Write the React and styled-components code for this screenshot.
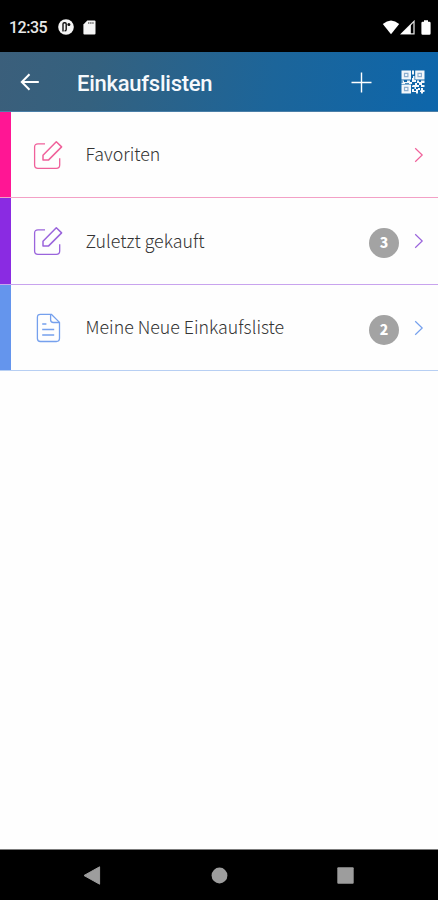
import React from 'react';
import styled, { createGlobalStyle } from 'styled-components';

const GlobalStyle = createGlobalStyle`
  * {
    box-sizing: border-box;
  }

  body {
    margin: 0;
    background: #fefefe;
  }

  svg {
    display: block;
    flex-shrink: 0;
  }
`;

const Screen = styled.div`
  display: flex;
  flex-direction: column;
  width: 100%;
  height: 900px;
  background: #fefefe;
`;

const StatusBar = styled.div`
  display: flex;
  align-items: center;
  height: 52px;
  padding: 2px 7px 0 9px;
  background: #000;
  color: #e8e8e8;
`;

const Clock = styled.span`
  width: 49px;
  padding-top: 1px;
  font: 500 16px/20px Roboto, sans-serif;
  letter-spacing: -0.5px;
  white-space: nowrap;
`;

const StatusIcons = styled.div`
  display: flex;
  align-items: center;
  gap: ${props => props.gap}px;
  margin-left: ${props => (props.end ? 'auto' : '0')};
`;

const StatusGap = styled.span`
  width: 6px;
`;

const Header = styled.header`
  display: flex;
  align-items: center;
  height: 60px;
  padding: 0 13px 0 20px;
  background: linear-gradient(100deg, #3b5f7b 0%, #34617f 22%, #1c659a 62%, #0d66ab 100%);
  border-bottom: 1px solid #4a7fa8;
  color: #fff;
`;

const Title = styled.h1`
  flex: 1;
  margin: 0 0 0 37px;
  padding-top: 4px;
  font: 500 22px/28px Roboto, sans-serif;
  letter-spacing: -0.25px;
  color: #f6f9fc;
`;

const HeaderActions = styled.div`
  display: flex;
  align-items: center;
  gap: 29px;
  padding-top: 1px;
`;

const List = styled.main`
  flex: 1;
`;

const Row = styled.div`
  display: flex;
  align-items: center;
  height: ${props => props.height}px;
  padding-right: 14px;
  border-bottom: 1px solid ${props => props.line};
  color: ${props => props.accent};
`;

const Stripe = styled.div`
  align-self: stretch;
  width: 11px;
  background: ${props => props.color};
`;

const RowIcon = styled.div`
  width: 74.5px;
  padding-left: 22px;
`;

const Label = styled.span`
  flex: 1;
  padding-bottom: 3px;
  font: 300 17.8px/26px "Noto Sans CJK SC", sans-serif;
  color: #333;
`;

const Badge = styled.span`
  display: flex;
  align-items: center;
  justify-content: center;
  width: 30px;
  height: 30px;
  margin: 4px 15px 0 0;
  padding-bottom: 2px;
  border-radius: 50%;
  background: #a3a3a3;
  font: 900 14px/28px "Noto Sans CJK SC", sans-serif;
  color: #fff;
`;

const NavBar = styled.nav`
  display: flex;
  justify-content: space-between;
  align-items: center;
  height: 51px;
  padding: 0 84px 0 83px;
  background: #000;
  border-top: 1px solid #7c7c7c;
`;

const AppIcon = () => (
    <svg width="16" height="16" viewBox="0 0 16 16">
        <circle cx="8" cy="8" r="7.8" fill="#f4f4f4" />
        <path d="M5 12.6V5q0-1.3 1.3-1.3H7q1.2 0 1.2 1.3v5.4q0 1.5-1.7 1.5" fill="none" stroke="#111" strokeWidth="1.4" />
        <circle cx="10.9" cy="5.4" r="1.5" fill="#111" />
    </svg>
);

const SdCardIcon = () => (
    <svg width="13" height="15" viewBox="0 0 13 15">
        <path d="M4.3.4h7.2q1 0 1 1v12.2q0 1-1 1H1.4q-1 0-1-1V4.4z" fill="#f4f4f4" />
        <path d="M5.1 3h6" stroke="#555" strokeWidth="1.3" strokeDasharray="1.3 .8" />
    </svg>
);

const WifiIcon = () => (
    <svg width="18" height="15" viewBox="0 0 18 15">
        <path d="M.8 4Q9-3 17.2 4L9 14.2z" fill="#fff" />
    </svg>
);

const SignalIcon = () => (
    <svg width="15" height="15" viewBox="0 0 15 15">
        <path d="M1.6 13.8 14 1.4v12.4z" fill="none" stroke="#ddd" strokeWidth="1.3" />
        <path d="M1 14 10.8 4.4V14z" fill="#fff" />
    </svg>
);

const BatteryIcon = () => (
    <svg width="10" height="15" viewBox="0 0 10 15">
        <path d="M3 .3h4v1.4h1.4q1.2 0 1.2 1.2v10.6q0 1.2-1.2 1.2H1.6q-1.2 0-1.2-1.2V2.9q0-1.2 1.2-1.2H3z" fill="#fff" />
    </svg>
);

const BackIcon = () => (
    <svg width="20" height="18" viewBox="0 0 20 18">
        <path d="M18.8 9H2.2M9.5 1.2 1.8 9l7.7 7.8" fill="none" stroke="#fff" strokeWidth="2" />
    </svg>
);

const PlusIcon = () => (
    <svg width="21" height="21" viewBox="0 0 21 21">
        <path d="M10.5.5v20M.5 10.5h20" stroke="#fff" strokeWidth="1.4" />
    </svg>
);

const QrIcon = () => (
    <svg width="24" height="24" viewBox="0 0 24 24">
        <path
            fill="#f3f7fb"
            fillRule="evenodd"
            d="M.5.5h9.5v9H.5zM14.2.5h9.3v9h-9.3zM.5 14.5h9.5v9H.5z"
        />
        <path fill="none" stroke="#8eafcf" strokeWidth="1.2" d="M3.5 3.3h3.4v3.4H3.5zM17 3.3h3.4v3.4H17zM3.5 17.3h3.4v3.4H3.5z" />
        <path
            fill="#f3f7fb"
            d="M11 .5h2v4h-2zM12 6h1.5v4H15v2h-4V8h1zM.5 10.5H3V12h3v-1.5h3V12h2v2H8v-.8H4V14H.5v-1.5H2v-1H.5zM16 10.5h2V12h2v-1.5h3.5V13H21v2h2.5v2H20v-2h-2v-2h-2zM12 15h2v-2h2v2h2v2h-3v2h-1.5v-2H11v-1zM11 19h2v2h2v-2h2v-1h2v2h-2v3.5h-2V22h-4zM20 18h2v2h1.5v2H22v1.5h-2V22h-1v-1.5h1z"
        />
    </svg>
);

const EditIcon = () => (
    <svg width="30" height="30" viewBox="0 0 30 30" fill="none" stroke="currentColor" strokeLinejoin="round">
        <path d="M12 3.8H5Q1.6 3.8 1.6 7v18q0 3.4 3.4 3.4h18.3q3.4 0 3.4-3.4v-6.7" strokeWidth="1.3" />
        <path d="M10 15.2 23.3 1.8l5.3 5.1-13.2 13.2H10z" strokeWidth="1.5" />
    </svg>
);

const DocumentIcon = () => (
    <svg width="30" height="30" viewBox="0 0 30 30" fill="none" stroke="currentColor" strokeLinejoin="round">
        <path d="M7.4 1.3h10.9l8.2 8.1v15.9q0 3.2-3.2 3.2H7.4q-3 0-3-3V4.3q0-3 3-3z" strokeWidth="1.3" />
        <path d="M17.6 1.5v5.2q0 2.8 2.8 2.8h6M9.2 11h4.2M9.2 16.5h12M9.2 22h12" strokeWidth="1.3" />
    </svg>
);

const ChevronIcon = () => (
    <svg width="10" height="16" viewBox="0 0 10 16">
        <path d="M1.2 1.2 8.2 8l-7 6.8" fill="none" stroke="currentColor" strokeWidth="1.2" />
    </svg>
);

const NavBackIcon = () => (
    <svg width="18" height="19" viewBox="0 0 18 19">
        <path d="M16.6.8v17.4L1 9.5z" fill="#9d9d9d" stroke="#9d9d9d" strokeLinejoin="round" />
    </svg>
);

const NavHomeIcon = () => (
    <svg width="17" height="17" viewBox="0 0 17 17">
        <circle cx="8.5" cy="8.5" r="7.9" fill="#9d9d9d" />
    </svg>
);

const NavRecentIcon = () => (
    <svg width="17" height="17" viewBox="0 0 17 17">
        <rect x=".3" y=".3" width="16.4" height="16.4" rx="1" fill="#9d9d9d" />
    </svg>
);

const lists = [
    {
        id: 1,
        name: 'Favoriten',
        stripe: '#ff1694',
        accent: '#f0609a',
        line: '#f3a0c6',
        height: 86,
        icon: EditIcon
    },
    {
        id: 2,
        name: 'Zuletzt gekauft',
        stripe: '#8a2be2',
        accent: '#9a64dc',
        line: '#c8a3ee',
        height: 87,
        count: 3,
        icon: EditIcon
    },
    {
        id: 3,
        name: 'Meine Neue Einkaufsliste',
        stripe: '#6495ed',
        accent: '#75a0ed',
        line: '#b7cff3',
        height: 86,
        count: 2,
        icon: DocumentIcon
    }
];

const App = () => {
    return (
        <Screen>
            <GlobalStyle />
            <StatusBar>
                <Clock>12:35</Clock>
                <StatusIcons gap={9}>
                    <AppIcon />
                    <SdCardIcon />
                </StatusIcons>
                <StatusIcons gap={0} end>
                    <WifiIcon />
                    <SignalIcon />
                    <StatusGap />
                    <BatteryIcon />
                </StatusIcons>
            </StatusBar>

            <Header>
                <BackIcon />
                <Title>Einkaufslisten</Title>
                <HeaderActions>
                    <PlusIcon />
                    <QrIcon />
                </HeaderActions>
            </Header>

            <List>
                {lists.map(list => (
                    <Row key={list.id} height={list.height} line={list.line} accent={list.accent}>
                        <Stripe color={list.stripe} />
                        <RowIcon>
                            <list.icon />
                        </RowIcon>
                        <Label>{list.name}</Label>
                        {list.count && <Badge>{list.count}</Badge>}
                        <ChevronIcon />
                    </Row>
                ))}
            </List>

            <NavBar>
                <NavBackIcon />
                <NavHomeIcon />
                <NavRecentIcon />
            </NavBar>
        </Screen>
    );
};

export default App;
